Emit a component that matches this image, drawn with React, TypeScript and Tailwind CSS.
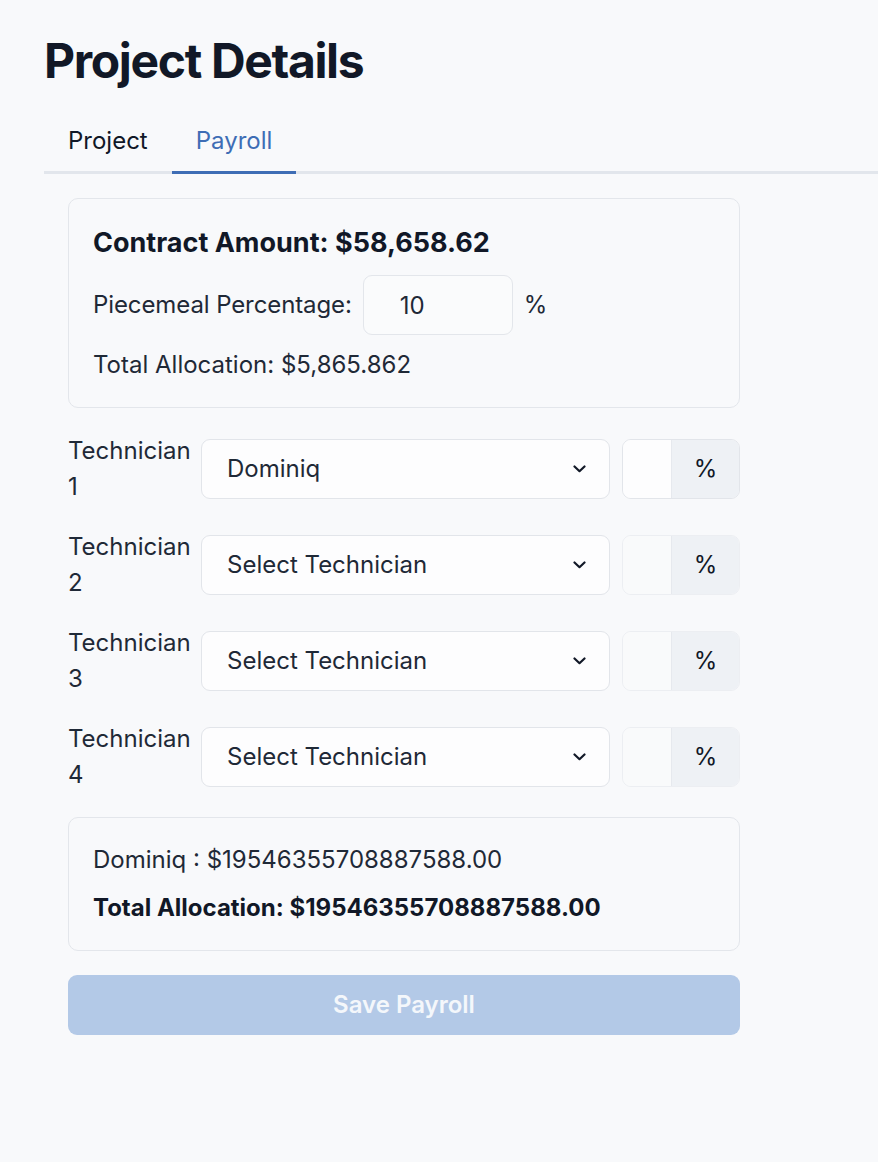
import React, { useState } from 'react';

const technicians = ['Dominiq', 'Select Technician', 'Select Technician', 'Select Technician'];

const Chevron = () => (
  <svg width="13" height="8" viewBox="0 0 13 8" fill="none" className="pointer-events-none absolute right-[24px] top-1/2 -translate-y-1/2">
    <path d="M1.5 1.5 L6.5 6.2 L11.5 1.5" stroke="#111827" strokeWidth="2.2" strokeLinecap="round" strokeLinejoin="round" />
  </svg>
);

export default function App() {
  const [tab, setTab] = useState('payroll');
  const [pct, setPct] = useState('10');

  return (
    <div className="min-h-screen bg-[#f8f9fb] pl-[44px] text-[#1f2937]" style={{ fontFamily: 'Inter, "Noto Sans", sans-serif' }}>
      <h1 className="pt-[37px] text-[48px] leading-[48px] font-bold tracking-[-1.35px] text-[#111827]">Project Details</h1>

      {/* Tabs */}
      <div className="mt-[19px] flex border-b-[3px] border-[#e2e6ec]">
        <button
          onClick={() => setTab('project')}
          className={`-mb-[3px] border-b-[3px] px-6 pt-[19px] pb-[12px] text-[24px] leading-[36px] ${
            tab === 'project' ? 'border-[#3e6db5] text-[#3e6db5]' : 'border-transparent text-[#111827]'
          }`}
        >
          Project
        </button>
        <button
          onClick={() => setTab('payroll')}
          className={`-mb-[3px] border-b-[3px] px-6 pt-[19px] pb-[12px] text-[24px] leading-[36px] ${
            tab === 'payroll' ? 'border-[#3e6db5] text-[#3e6db5]' : 'border-transparent text-[#111827]'
          }`}
        >
          Payroll
        </button>
      </div>

      <div className="w-[720px] px-6 pt-6 text-[24px] leading-[36px]">
        {/* Contract card */}
        <div className="rounded-[10px] border border-[#e3e6eb] p-6">
          <p className="text-[27px] leading-[40px] font-bold text-[#111827]">Contract Amount: $58,658.62</p>
          <div className="mt-3 flex items-center gap-[11px]">
            <span className="tracking-[-0.1px]">Piecemeal Percentage:</span>
            <input
              value={pct}
              onChange={(e) => setPct(e.target.value)}
              className="h-[60px] w-[150px] rounded-[9px] border border-[#e3e6eb] bg-[#fafbfc] px-[36px] text-[24px] text-[#1f2937] outline-none"
            />
            <span>%</span>
          </div>
          <p className="mt-3">Total Allocation: $5,865.862</p>
        </div>

        {/* Technician rows */}
        <div className="mt-[25px] flex flex-col gap-6">
          {technicians.map((t, i) => (
            <div key={i} className="flex items-center gap-3">
              <label className="w-[121px] shrink-0">Technician {i + 1}</label>
              <div className="relative flex-1">
                <select
                  defaultValue={t}
                  className="h-[60px] w-full appearance-none rounded-[9px] border border-[#e2e5ea] bg-[#fdfdfe] pl-[25px] text-[24px] text-[#1f2937] outline-none"
                >
                  <option>Select Technician</option>
                  <option>Dominiq</option>
                </select>
                <Chevron />
              </div>
              <div
                className={`flex h-[60px] w-[118px] shrink-0 overflow-hidden rounded-[9px] border ${
                  i === 0 ? 'border-[#e2e5ea]' : 'border-[#eceef2]'
                }`}
              >
                <input className={`w-[48px] outline-none ${i === 0 ? 'bg-[#fdfdfe]' : 'bg-[#f9fafb]'}`} />
                <span className="flex flex-1 items-center justify-center border-l border-[#e6e9ee] bg-[#eef1f5] text-[#111827]">%</span>
              </div>
            </div>
          ))}
        </div>

        {/* Summary card */}
        <div className="mt-6 rounded-[10px] border border-[#e3e6eb] p-6">
          <p>Dominiq : $19546355708887588.00</p>
          <p className="mt-3 font-bold text-[#111827]">Total Allocation: $19546355708887588.00</p>
        </div>

        <button
          disabled
          className="mt-6 h-[60px] w-full rounded-[9px] bg-[#b3c9e7] text-[24px] font-semibold text-[#f4f7fb]"
        >
          Save Payroll
        </button>
      </div>
    </div>
  );
}
